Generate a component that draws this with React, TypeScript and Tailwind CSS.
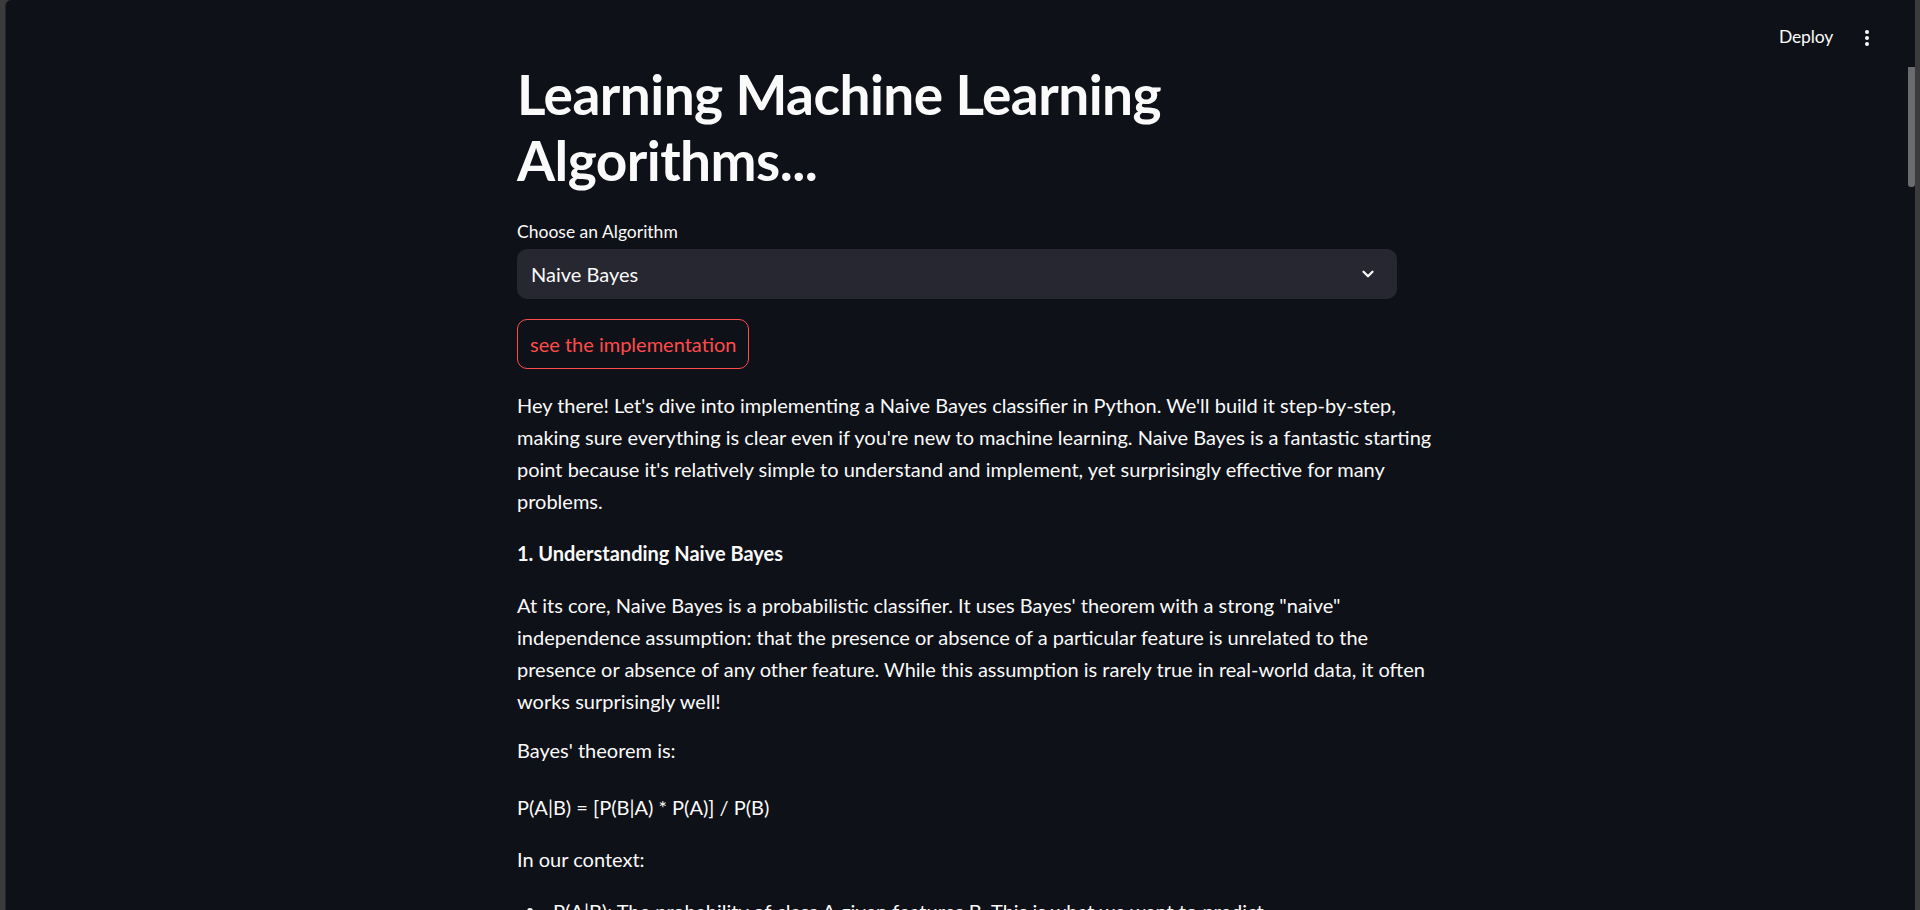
import { FC } from "react";

const Para: FC<{ lines: string[]; bold?: boolean; extra?: string }> = ({ lines, bold, extra }) => (
  <p className={"mb-[20px] whitespace-nowrap " + (bold ? "font-bold " : "") + (extra ?? "")}>
    {lines.map((l, i) => (
      <span key={i} className="block">
        {l}
      </span>
    ))}
  </p>
);

const App: FC = () => {
  return (
    <div className="flex h-[910px] w-full overflow-hidden bg-[#3b3b3b] font-[Lato,sans-serif] text-[#fafafa]">
      <div className="w-[5px] shrink-0 bg-[#3b3b3b]" />
      <div className="flex flex-1 rounded-tl-[6px] border-l border-[#26272e] bg-[#0e1117]">
        <main className="flex flex-1 flex-col">
          {/* header */}
          <header className="flex h-[75px] shrink-0 items-center justify-end gap-[32px] pr-[39px]">
            <button className="text-[17.5px] tracking-[-0.01em]">Deploy</button>
            <button className="flex flex-col items-center gap-[2px]">
              <span className="h-[4px] w-[4px] rounded-full bg-[#fafafa]" />
              <span className="h-[4px] w-[4px] rounded-full bg-[#fafafa]" />
              <span className="h-[4px] w-[4px] rounded-full bg-[#fafafa]" />
            </button>
          </header>

          <div className="mx-auto w-[880px] text-[20px] leading-[32px]">
            <h1 className="-mt-[14px] mb-[28px] text-[55px] font-bold leading-[66px] tracking-[-0.01em]">
              Learning Machine Learning
              <br />
              Algorithms...
            </h1>

            <label className="mb-[6px] block text-[17.5px] leading-[22px]">Choose an Algorithm</label>
            <div className="mb-[20px] flex h-[50px] items-center justify-between rounded-[10px] bg-[#262730] pl-[14px] pr-[20px]">
              <span>Naive Bayes</span>
              <svg width="18" height="18" viewBox="0 0 24 24" fill="none" stroke="#fafafa" strokeWidth="3" strokeLinecap="round" strokeLinejoin="round">
                <path d="M6 9l6 6 6-6" />
              </svg>
            </div>

            <button className="mb-[20px] h-[50px] rounded-[10px] border border-[#ff4b4b] px-[12px] text-[#ff4b4b]">
              see the implementation
            </button>

            <Para
              lines={[
                "Hey there! Let's dive into implementing a Naive Bayes classifier in Python. We'll build it step-by-step,",
                "making sure everything is clear even if you're new to machine learning. Naive Bayes is a fantastic starting",
                "point because it's relatively simple to understand and implement, yet surprisingly effective for many",
                "problems.",
              ]}
            />
            <Para bold lines={["1. Understanding Naive Bayes"]} />
            <Para
              lines={[
                'At its core, Naive Bayes is a probabilistic classifier. It uses Bayes\' theorem with a strong "naive"',
                "independence assumption: that the presence or absence of a particular feature is unrelated to the",
                "presence or absence of any other feature. While this assumption is rarely true in real-world data, it often",
                "works surprisingly well!",
              ]}
            />
            <Para extra="-mt-[3px]" lines={["Bayes' theorem is:"]} />
            <Para extra="pt-[5px]" lines={["P(A|B) = [P(B|A) * P(A)] / P(B)"]} />
            <Para lines={["In our context:"]} />
            <ul className="pl-[10px]">
              <li className="flex items-center">
                <span className="mr-[20px] h-[6px] w-[6px] shrink-0 rounded-full bg-[#fafafa]" />
                <span className="whitespace-nowrap">P(A|B): The probability of class A given features B. This is what we want to predict.</span>
              </li>
            </ul>
          </div>
        </main>

        {/* scrollbar */}
        <div className="w-[7px] shrink-0">
          <div className="mt-[67px] h-[120px] rounded-b-[3px] bg-[#6b6b6f]" />
        </div>
      </div>
      <div className="w-[5px] shrink-0 bg-[#3b3b3b]" />
    </div>
  );
};

export default App;
